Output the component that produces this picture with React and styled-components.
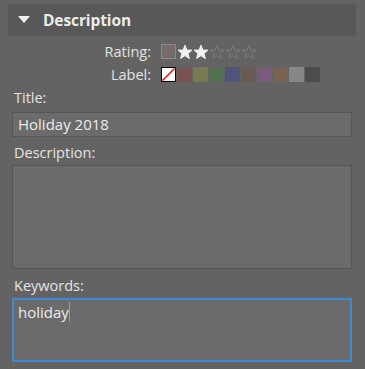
import React from "react";
import styled, { createGlobalStyle } from "styled-components";

const Global = createGlobalStyle`
  html, body { margin: 0; padding: 0; background: #636363; }
  body { font-family: "Open Sans", "Noto Sans", sans-serif; color: #e4e4e4; }
`;

const Panel = styled.div`
  padding: 4px 9px 0 8px;
  width: 365px;
  box-sizing: border-box;
`;

const Header = styled.div`
  height: 32px;
  background: #585858;
  display: flex;
  align-items: center;
  padding-left: 10px;
  gap: 13px;
`;

const Caret = styled.svg`
  width: 12px;
  height: 8px;
  display: block;
`;

const HeaderTitle = styled.span`
  font-weight: 700;
  font-size: 15.5px;
  color: #ececec;
  letter-spacing: -0.1px;
`;

const Body = styled.div`
  padding: 0 4px;
  display: flex;
  flex-direction: column;
`;

const Meta = styled.div`
  margin-top: 6px;
  display: grid;
  grid-template-columns: 139px auto;
  column-gap: 10px;
  row-gap: 4px;
  align-items: center;
`;

const MetaLabel = styled.div`
  text-align: right;
  font-size: 14.5px;
  line-height: 19px;
`;

const MetaValue = styled.div`
  display: flex;
  align-items: center;
  height: 19px;
`;

const NoRating = styled.svg`
  width: 15px;
  height: 15px;
  display: block;
  margin-right: 1px;
`;

const Star = styled.svg`
  width: 16px;
  height: 16px;
  display: block;
`;

const Swatches = styled.div`
  display: flex;
  gap: 1px;
`;

const Swatch = styled.div`
  width: 15px;
  height: 15px;
  box-sizing: border-box;
  background: ${(p) => p.$color};
`;

const NoneSwatch = styled.svg`
  width: 15px;
  height: 15px;
  display: block;
`;

const FieldLabel = styled.div`
  font-size: 14.5px;
  line-height: 20px;
  padding-left: 2px;
  margin-top: ${(p) => p.$top}px;
`;

const Box = styled.div`
  box-sizing: border-box;
  margin-top: ${(p) => p.$top}px;
  height: ${(p) => p.$h}px;
  background: #6b6b6b;
  border: 1px solid ${(p) => (p.$focus ? "#3a8ad6" : "#565656")};
  ${(p) => (p.$focus ? "box-shadow: 0 0 0 1px #3a8ad6 inset;" : "")}
  padding: ${(p) => (p.$focus ? "2px 5px" : "0 5px")};
  font-size: 15px;
  line-height: ${(p) => (p.$single ? "23px" : "22px")};
  color: #ececec;
  display: flex;
  align-items: flex-start;
`;

const TypeCaret = styled.span`
  display: inline-block;
  width: 1px;
  height: 20px;
  background: #9a9a9a;
  margin-left: 0;
  margin-top: 1px;
`;

const StarShape = ({ filled }) => (
  <Star viewBox="0 0 16 16">
    <path
      d="M8 1.2 L9.9 6 L15 6.2 L11 9.4 L12.4 14.5 L8 11.6 L3.6 14.5 L5 9.4 L1 6.2 L6.1 6 Z"
      fill={filled ? "#f2f2f2" : "none"}
      stroke={filled ? "#f2f2f2" : "#7c7c7c"}
      strokeWidth="1"
      strokeLinejoin="round"
    />
  </Star>
);

const labelColors = [
  "#7a5252",
  "#7a7a52",
  "#527252",
  "#52527e",
  "#6a5a52",
  "#7a5a7e",
  "#7a6252",
  "#878787",
  "#4c4c4c",
];

export default function App() {
  return (
    <>
      <Global />
      <Panel>
        <Header>
          <Caret viewBox="0 0 12 8">
            <path d="M0 0 H12 L6 7 Z" fill="#f0f0f0" />
          </Caret>
          <HeaderTitle>Description</HeaderTitle>
        </Header>
        <Body>
          <Meta>
            <MetaLabel>Rating:</MetaLabel>
            <MetaValue>
              <NoRating viewBox="0 0 15 15">
                <rect x="0.5" y="0.5" width="14" height="14" fill="#6e6e6e" stroke="#8a8a8a" />
                <line x1="1" y1="14" x2="14" y2="1" stroke="#956456" strokeWidth="1.6" />
              </NoRating>
              <StarShape filled />
              <StarShape filled />
              <StarShape />
              <StarShape />
              <StarShape />
            </MetaValue>
            <MetaLabel>Label:</MetaLabel>
            <MetaValue>
              <Swatches>
                <NoneSwatch viewBox="0 0 15 15">
                  <rect x="0.5" y="0.5" width="14" height="14" fill="#ffffff" stroke="#000000" />
                  <line x1="1.5" y1="13.5" x2="13.5" y2="1.5" stroke="#ee1111" strokeWidth="1.6" />
                </NoneSwatch>
                {labelColors.map((c) => (
                  <Swatch key={c} $color={c} />
                ))}
              </Swatches>
            </MetaValue>
          </Meta>
          <FieldLabel $top={4}>Title:</FieldLabel>
          <Box $top={4} $h={25} $single>Holiday 2018</Box>
          <FieldLabel $top={6}>Description:</FieldLabel>
          <Box $top={2} $h={104} />
          <FieldLabel $top={7}>Keywords:</FieldLabel>
          <Box $top={2} $h={64} $focus>
            holiday
            <TypeCaret />
          </Box>
        </Body>
      </Panel>
    </>
  );
}
